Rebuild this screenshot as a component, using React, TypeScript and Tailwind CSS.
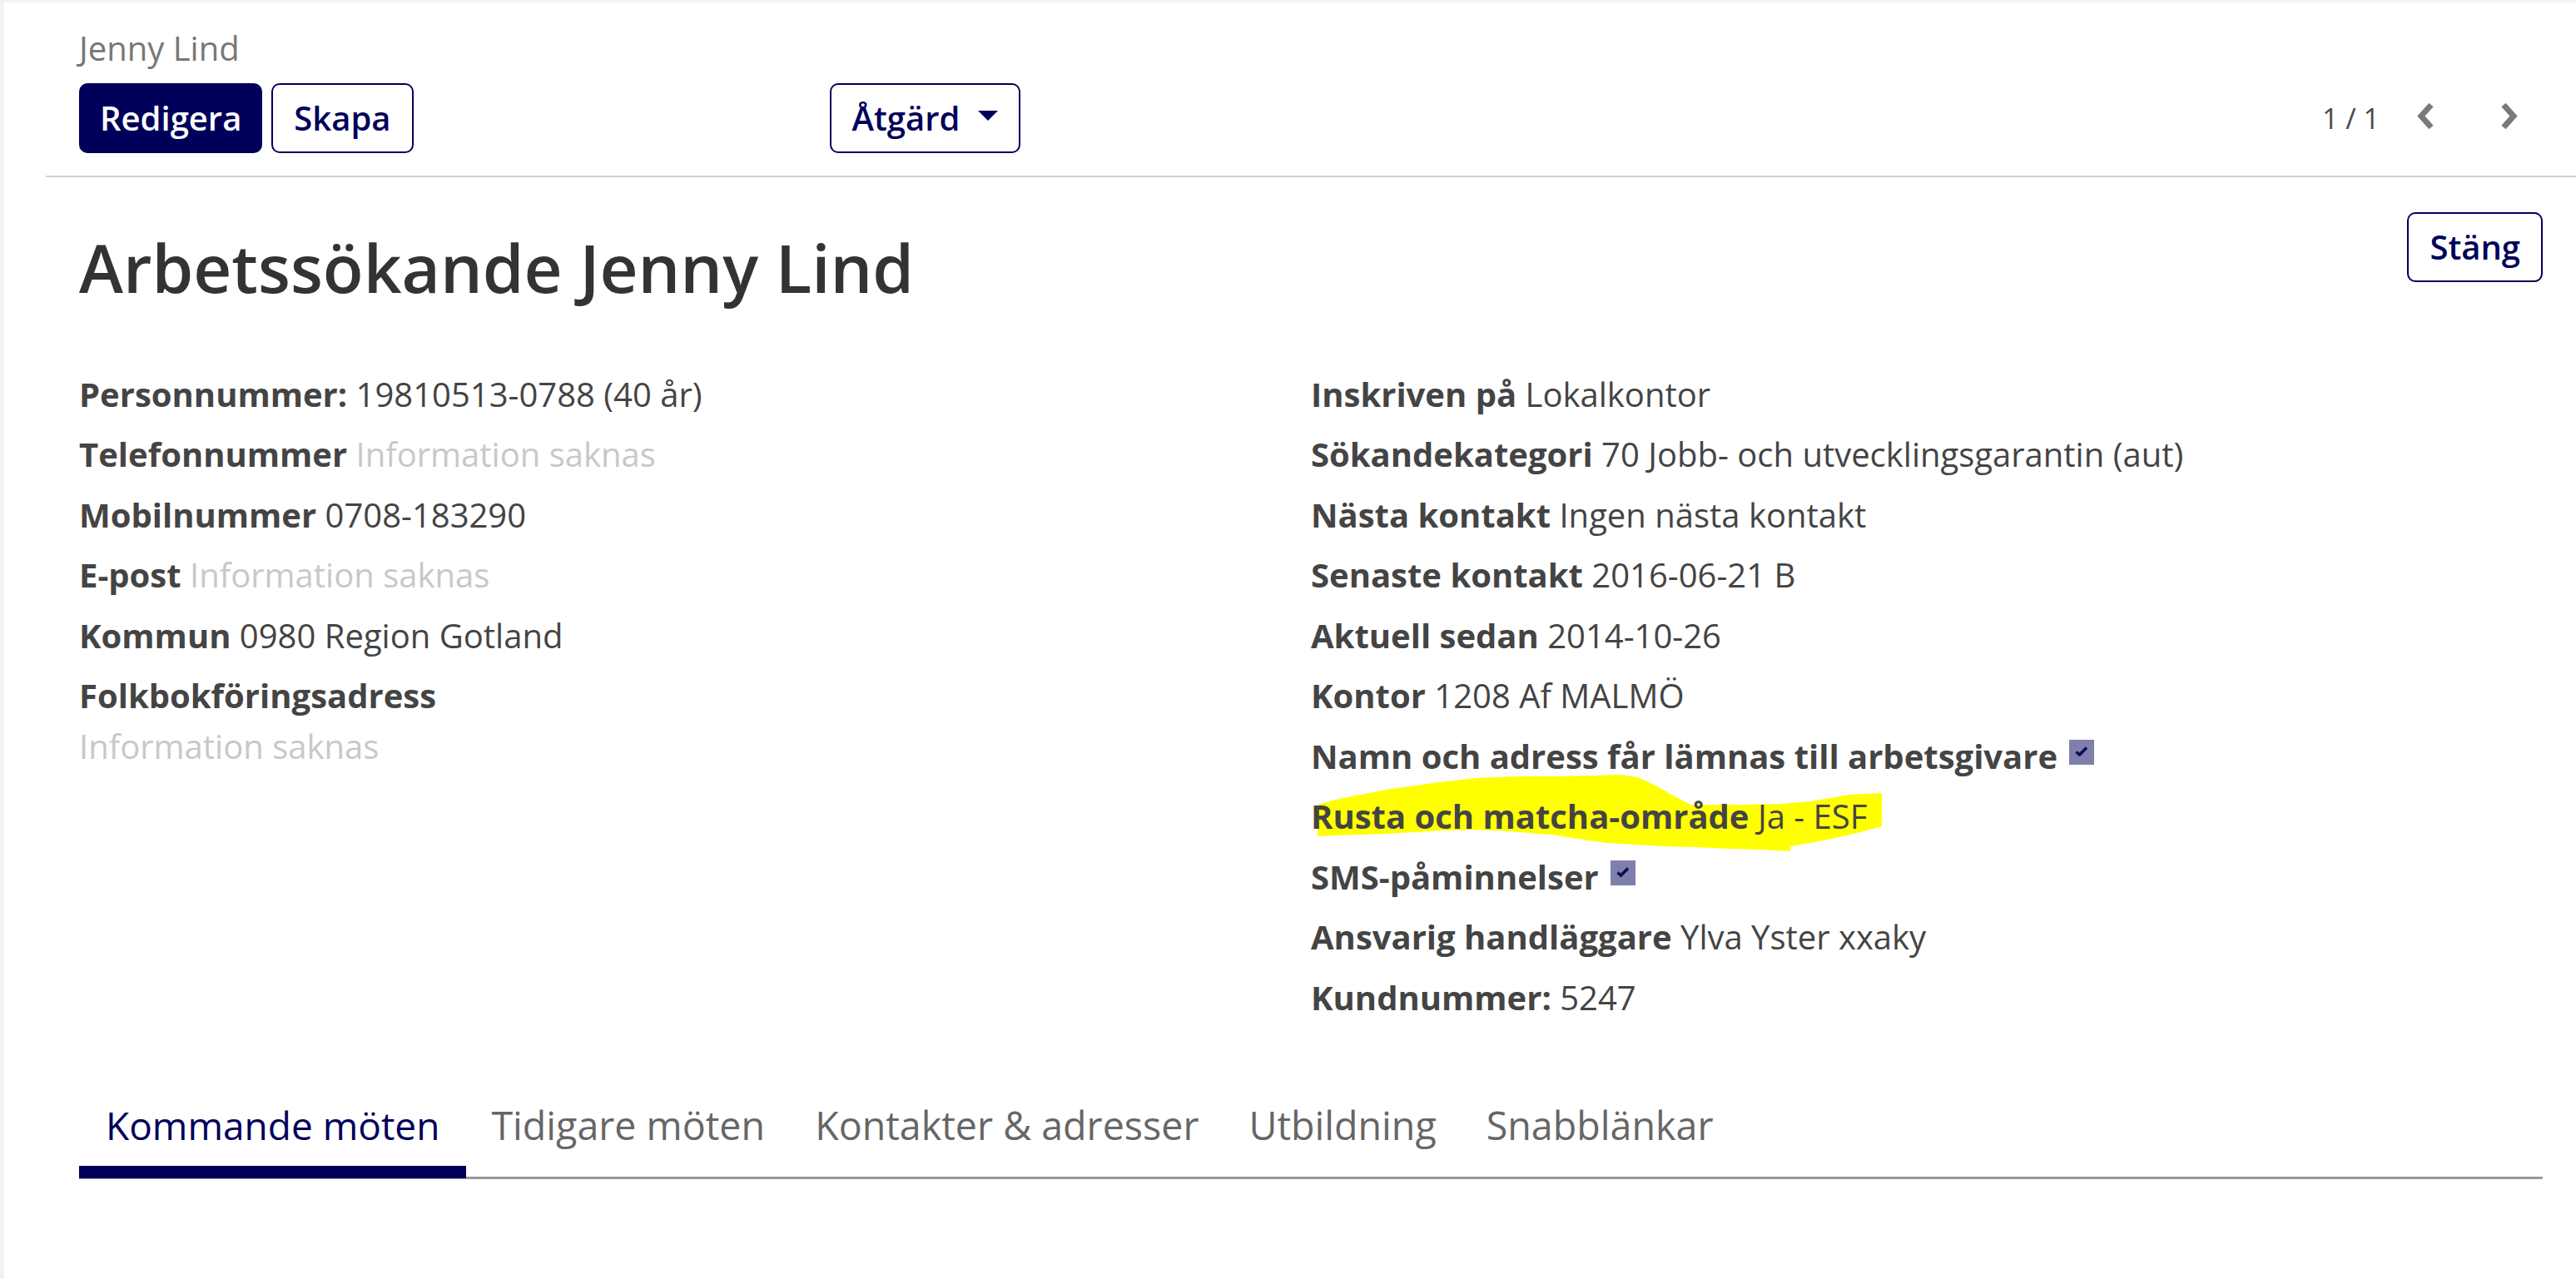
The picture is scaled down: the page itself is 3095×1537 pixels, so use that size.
import React from "react";

const Missing = ({ children }: { children: React.ReactNode }) => (
  <span className="text-[#c8c8c8]">{children}</span>
);

const ReadonlyCheck = () => (
  <span className="relative ml-[14px] mb-[5px] inline-block h-[30px] w-[30px] bg-[#7f7fad] align-baseline">
    <svg className="absolute left-[7px] top-[8px]" width="16" height="12" viewBox="0 0 16 12">
      <path d="M1.5 6.5 L5.5 10 L14 1.5" stroke="#0b0b55" strokeWidth="3.6" fill="none" />
    </svg>
  </span>
);

const Chevron = ({ dir }: { dir: "left" | "right" }) => (
  <svg width="23" height="35" viewBox="0 0 23 35" className="mb-[5px]">
    <polyline
      points={dir === "left" ? "19,4 7,17.5 19,31" : "4,4 16,17.5 4,31"}
      fill="none"
      stroke="#777b7e"
      strokeWidth="7"
      strokeLinejoin="miter"
    />
  </svg>
);

interface Row {
  label: string;
  value?: React.ReactNode;
}

const leftRows: Row[] = [
  { label: "Personnummer:", value: "19810513-0788 (40 år)" },
  { label: "Telefonnummer", value: <Missing>Information saknas</Missing> },
  { label: "Mobilnummer", value: "0708-183290" },
  { label: "E-post", value: <Missing>Information saknas</Missing> },
  { label: "Kommun", value: "0980 Region Gotland" },
];

const rightRows: Row[] = [
  { label: "Inskriven på", value: "Lokalkontor" },
  { label: "Sökandekategori", value: "70 Jobb- och utvecklingsgarantin (aut)" },
  { label: "Nästa kontakt", value: "Ingen nästa kontakt" },
  { label: "Senaste kontakt", value: "2016-06-21 B" },
  { label: "Aktuell sedan", value: "2014-10-26" },
  { label: "Kontor", value: "1208 Af MALMÖ" },
];

const tabs = ["Kommande möten", "Tidigare möten", "Kontakter & adresser", "Utbildning", "Snabblänkar"];

const btn =
  "h-[84px] rounded-[10px] border-2 border-[#00005a] py-[10px] text-[40px] leading-[60px] font-semibold";

export default function App() {
  return (
    <div className="min-h-[1537px] w-full bg-[#f2f2f2] pl-[5px] pt-[3px] font-['Open_Sans',sans-serif]">
      <div className="min-h-[1534px] bg-white">
        {/* Control panel */}
        <div className="ml-[50px] border-b-2 border-[#cfcfcf] pl-[40px] pr-[68px] pt-[26px] pb-[27px]">
          <div className="text-[40px] leading-[58px] text-[#777]">Jenny Lind</div>
          <div className="mt-[13px] flex items-center">
            <button className={`${btn} bg-[#00005a] px-[23px] text-white`}>Redigera</button>
            <button className={`${btn} ml-[11px] bg-white px-[25px] text-[#00005a]`}>Skapa</button>
            <button className={`${btn} ml-[500px] flex items-center bg-white px-[25px] text-[#00005a]`}>
              Åtgärd
              <span className="ml-[22px] mb-[6px] inline-block h-0 w-0 border-x-[12px] border-t-[12px] border-x-transparent border-t-[#00005a]" />
            </button>
            <div className="ml-auto flex items-center">
              <span className="text-[34px] leading-[51px] text-[#4a4a4a]">1 / 1</span>
              <span className="ml-[43px] flex">
                <Chevron dir="left" />
              </span>
              <span className="ml-[79px] flex">
                <Chevron dir="right" />
              </span>
            </div>
          </div>
        </div>

        {/* Sheet */}
        <div className="ml-[90px] mr-[40px] pt-[42px]">
          <div className="flex items-start justify-between">
            <h1 className="mt-[18px] text-[80px] font-semibold leading-[96px] text-[#333]">
              Arbetssökande Jenny Lind
            </h1>
            <button className={`${btn} bg-white px-[25px] text-[#00005a]`}>Stäng</button>
          </div>

          <div className="mt-[73.5px] grid grid-cols-2 text-[40px] leading-[61px] text-[#444]">
            <div>
              {leftRows.map((r) => (
                <div key={r.label} className="mb-[11.5px]">
                  <span className="font-bold">{r.label}</span> {r.value}
                </div>
              ))}
              <div className="mb-[11.5px]">
                <div className="font-bold">Folkbokföringsadress</div>
                <Missing>Information saknas</Missing>
              </div>
            </div>

            <div>
              {rightRows.map((r) => (
                <div key={r.label} className="mb-[11.5px]">
                  <span className="font-bold">{r.label}</span> {r.value}
                </div>
              ))}
              <div className="mb-[11.5px]">
                <span className="font-bold">Namn och adress får lämnas till arbetsgivare</span>
                <ReadonlyCheck />
              </div>
              <div className="relative mb-[11.5px]">
                {/* highlighter mark */}
                <svg
                  className="absolute left-0 top-[-20px]"
                  width="700"
                  height="100"
                  viewBox="0 0 700 100"
                >
                  <path
                    d="M8 37 L30 31 L49 27 L90 19 L132 13 L170 8 L199 5 L250 3 L298 3 L340 2 L373 1 L392 4 L406 10 L420 17 L431 24 L445 31 L456 37 L520 37 L565 36 L600 33 L630 28 L646 25 L686 23 L686 63 L660 70 L630 77 L600 83 L576 87 L576 93 L540 91 L505 90 L460 88 L422 87 L390 85 L356 83 L320 78 L290 73 L273 72 L240 69 L199 67 L160 68 L124 70 L90 72 L58 73 L30 74 L8 75 Z"
                    fill="#ffff00"
                  />
                </svg>
                <span className="relative">
                  <span className="font-bold">Rusta och matcha-område</span> Ja - ESF
                </span>
              </div>
              <div className="mb-[11.5px]">
                <span className="font-bold">SMS-påminnelser</span>
                <ReadonlyCheck />
              </div>
              <div className="mb-[11.5px]">
                <span className="font-bold">Ansvarig handläggare</span> Ylva Yster xxaky
              </div>
              <div className="mb-[11.5px]">
                <span className="font-bold">Kundnummer:</span> 5247
              </div>
            </div>
          </div>

          {/* Tabs */}
          <div className="mt-[77.5px] flex border-b-[3px] border-[#999]">
            {tabs.map((t, i) => (
              <div
                key={t}
                className={
                  i === 0
                    ? "-mb-[2px] border-b-[15px] border-[#00005a] px-[32px] pb-[14px] text-[46px] leading-[69px] text-[#00005a]"
                    : "-mb-[2px] border-b-[15px] border-transparent px-[30px] pb-[14px] text-[46.6px] leading-[69px] text-[#666]"
                }
              >
                {t}
              </div>
            ))}
          </div>
        </div>
      </div>
    </div>
  );
}
